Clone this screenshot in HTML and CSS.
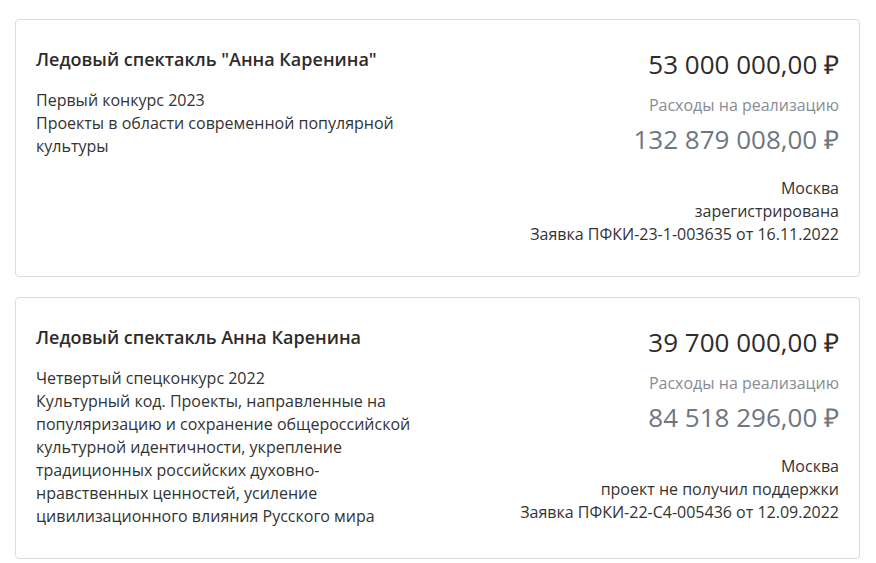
FILE: index.html
```html
<!DOCTYPE html>
<html lang="ru">
<head>
<meta charset="utf-8">
<link rel="stylesheet" href="styles.css">
</head>
<body>
<div class="list">
  <div class="card">
    <div class="left">
      <div class="title">Ледовый спектакль "Анна Каренина"</div>
      <div class="desc">Первый конкурс 2023<br>Проекты в области современной популярной культуры</div>
    </div>
    <div class="right">
      <div class="amount">53 000 000,00 ₽</div>
      <div class="label">Расходы на реализацию</div>
      <div class="amount gray">132 879 008,00 ₽</div>
      <div class="meta">Москва<br>зарегистрирована<br>Заявка ПФКИ-23-1-003635 от 16.11.2022</div>
    </div>
  </div>
  <div class="card">
    <div class="left">
      <div class="title">Ледовый спектакль Анна Каренина</div>
      <div class="desc">Четвертый спецконкурс 2022<br>Культурный код. Проекты, направленные на популяризацию и сохранение общероссийской культурной идентичности, укрепление традиционных российских духовно-нравственных ценностей, усиление цивилизационного влияния Русского мира</div>
    </div>
    <div class="right">
      <div class="amount">39 700 000,00 ₽</div>
      <div class="label">Расходы на реализацию</div>
      <div class="amount gray">84 518 296,00 ₽</div>
      <div class="meta">Москва<br>проект не получил поддержки<br>Заявка ПФКИ-22-С4-005436 от 12.09.2022</div>
    </div>
  </div>
</div>
</body>
</html>
```
FILE: styles.css
```css
html, body {
  margin: 0;
  padding: 0;
  background: #fff;
}
body {
  font-family: "Open Sans", "Liberation Sans", sans-serif;
  color: #2f2b2b;
}
.list {
  padding: 19px 16px 0 15px;
  display: flex;
  flex-direction: column;
  gap: 20px;
}
.card {
  border: 1px solid #dcdcdc;
  border-radius: 4px;
  padding: 27px 20px 30px 20px;
  display: flex;
  justify-content: space-between;
  align-items: flex-start;
}
.left {
  width: 380px;
}
.title {
  font-size: 18px;
  font-weight: 600;
  line-height: 24px;
  color: #2f2b2b;
}
.desc {
  margin-top: 18px;
  font-size: 16px;
  line-height: 23px;
  color: #333;
}
.right {
  text-align: right;
  display: flex;
  flex-direction: column;
}
.amount {
  font-size: 26px;
  line-height: 34px;
  color: #2f2b2b;
}
.label {
  margin-top: 13px;
  font-size: 16px;
  line-height: 23px;
  color: #888c93;
}
.amount.gray {
  margin-top: 4px;
  line-height: 36px;
  color: #6f7680;
}
.meta {
  margin-top: 20px;
  font-size: 16px;
  line-height: 23px;
  color: #333;
}
```
